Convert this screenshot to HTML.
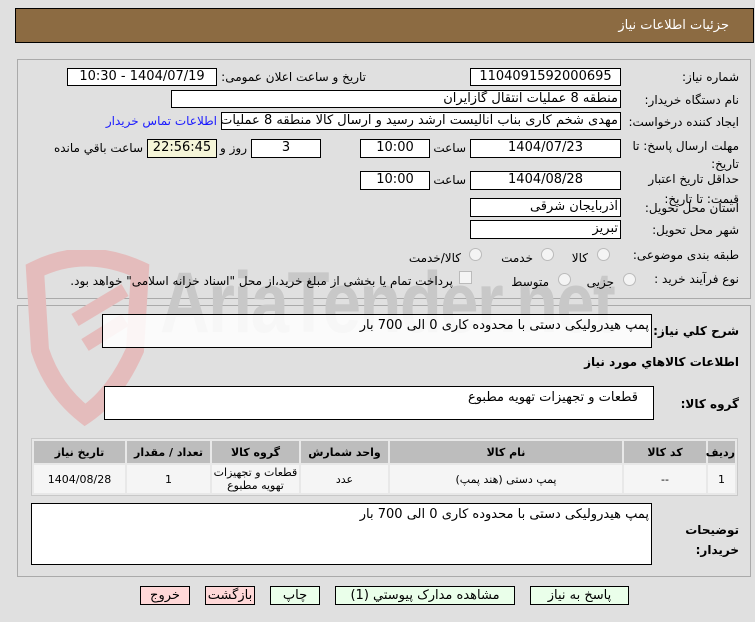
<!DOCTYPE html>
<html><head><meta charset="utf-8"><style>
*{margin:0;padding:0;box-sizing:border-box}
body{width:755px;height:622px;background:#e0e0e0;font-family:Tahoma,"DejaVu Sans","Liberation Sans",sans-serif;font-size:12px;color:#000;position:relative;overflow:hidden}
.a{position:absolute}
.r{direction:rtl;text-align:right;white-space:nowrap}
.box{position:absolute;background:#fff;border:1px solid #000;direction:rtl;white-space:nowrap;overflow:hidden;font-size:13px;line-height:16px;padding:0 2px}
.c{text-align:center}
.lbl{position:absolute;direction:rtl;white-space:nowrap;font-size:12px}
.rad{position:absolute;width:13px;height:13px;border-radius:50%;border:1px solid #bbb;background:#f4f4f4}
.btn{position:absolute;top:586px;height:19px;border:1px solid #000;background:#eaffea;font-size:13px;text-align:center;line-height:17px;direction:rtl}
table{border-collapse:separate;border-spacing:2px;position:absolute;left:31px;top:438px;width:707px;background:#e8e8e8;border:1px solid #c8c8c8;direction:rtl;font-size:11px;table-layout:fixed}
th{background:#bdbdbd;height:22px;font-weight:bold;font-size:11px}
td{background:#f5f5f5;height:28px;text-align:center;line-height:13px;overflow:hidden}
</style></head><body>
<div class="a" style="left:15px;top:8px;width:739px;height:35px;background:#8c6b42;border:1px solid #000"></div>
<div class="a r" style="right:26px;top:18px;color:#fff;font-size:13px">جزئیات اطلاعات نیاز</div>

<div class="a" style="left:17px;top:59px;width:734px;height:240px;border:1px solid #aaa"></div>
<div class="a" style="left:17px;top:305px;width:734px;height:272px;border:1px solid #aaa"></div>

<svg class="a" style="left:25px;top:250px" width="130" height="180" viewBox="0 0 130 180"><path d="M10 20 Q60 -5 115 20 L110 100 Q90 145 60 165 Q28 140 15 100 Z" fill="none" stroke="#e4bcbc" stroke-width="18"/><path d="M50 70 L100 40 M60 95 L100 70" stroke="#e4bcbc" stroke-width="14"/></svg>
<div class="a" style="left:160px;top:258px;font-size:86px;font-weight:bold;color:#c8c8c8;font-family:'Liberation Sans',sans-serif;letter-spacing:-2px;line-height:90px;transform:scaleX(0.8);transform-origin:left">AriaTender.net</div>

<div class="lbl" style="right:16px;top:70px">شماره نیاز:</div>
<div class="box c" style="left:470px;top:68px;width:151px;height:18px">1104091592000695</div>
<div class="lbl" style="right:389px;top:70px">تاریخ و ساعت اعلان عمومی:</div>
<div class="box c" style="left:67px;top:68px;width:150px;height:18px">1404/07/19 - 10:30</div>

<div class="lbl" style="right:16px;top:93px">نام دستگاه خریدار:</div>
<div class="box" style="left:171px;top:90px;width:450px;height:18px">منطقه 8 عملیات انتقال گازایران</div>

<div class="lbl" style="right:16px;top:115px">ایجاد کننده درخواست:</div>
<div class="box" style="left:221px;top:112px;width:400px;height:18px">مهدی شخم کاری بناب آنالیست ارشد رسید و ارسال کالا منطقه 8 عملیات انتقال</div>
<div class="lbl" style="right:538px;top:114px;color:#1a1aff">اطلاعات تماس خریدار</div>

<div class="lbl" style="right:16px;top:137px;line-height:18px">مهلت ارسال پاسخ: تا<br>تاریخ:</div>
<div class="box c" style="left:470px;top:139px;width:151px;height:19px">1404/07/23</div>
<div class="lbl" style="right:289px;top:141px">ساعت</div>
<div class="box c" style="left:360px;top:139px;width:70px;height:19px">10:00</div>
<div class="box c" style="left:251px;top:139px;width:70px;height:19px">3</div>
<div class="lbl" style="right:508px;top:141px">روز و</div>
<div class="box c" style="left:147px;top:139px;width:70px;height:19px;background:#f5f5d8">22:56:45</div>
<div class="lbl" style="right:612px;top:141px">ساعت باقي مانده</div>

<div class="lbl" style="right:16px;top:169px;line-height:20px">حداقل تاریخ اعتبار<br>قیمت: تا تاریخ:</div>
<div class="box c" style="left:470px;top:171px;width:151px;height:19px">1404/08/28</div>
<div class="lbl" style="right:289px;top:173px">ساعت</div>
<div class="box c" style="left:360px;top:171px;width:70px;height:19px">10:00</div>

<div class="lbl" style="right:16px;top:201px">استان محل تحویل:</div>
<div class="box" style="left:470px;top:198px;width:151px;height:19px">آذربایجان شرقی</div>
<div class="lbl" style="right:16px;top:223px">شهر محل تحویل:</div>
<div class="box" style="left:470px;top:220px;width:151px;height:19px">تبریز</div>

<div class="lbl" style="right:16px;top:248px">طبقه بندی موضوعی:</div>
<div class="rad" style="left:597px;top:248px"></div><div class="lbl" style="right:167px;top:251px">کالا</div>
<div class="rad" style="left:541px;top:248px"></div><div class="lbl" style="right:222px;top:251px">خدمت</div>
<div class="rad" style="left:469px;top:248px"></div><div class="lbl" style="right:294px;top:251px">کالا/خدمت</div>

<div class="lbl" style="right:16px;top:272px">نوع فرآیند خرید :</div>
<div class="rad" style="left:623px;top:273px"></div><div class="lbl" style="right:141px;top:275px">جزیی</div>
<div class="rad" style="left:558px;top:273px"></div><div class="lbl" style="right:206px;top:275px">متوسط</div>
<div class="a" style="left:459px;top:271px;width:13px;height:13px;border:1px solid #bbb;background:#f4f4f4"></div>
<div class="lbl" style="right:302px;top:274px">پرداخت تمام یا بخشی از مبلغ خرید،از محل "اسناد خزانه اسلامی" خواهد بود.</div>

<div class="lbl" style="right:16px;top:324px;font-weight:bold">شرح کلي نیاز:</div>
<div class="box" style="left:102px;top:314px;width:550px;height:34px;line-height:22px;background:rgba(255,255,255,0.85)">پمپ هیدرولیکی دستی با محدوده کاری 0 الی 700 بار</div>
<div class="lbl" style="right:16px;top:355px;font-weight:bold">اطلاعات کالاهاي مورد نیاز</div>
<div class="lbl" style="right:16px;top:397px;font-weight:bold">گروه کالا:</div>
<div class="box" style="left:104px;top:386px;width:550px;height:34px;line-height:22px;padding-right:15px">قطعات و تجهیزات تهویه مطبوع</div>

<table>
<colgroup><col style="width:27px"><col style="width:82px"><col><col style="width:87px"><col style="width:87px"><col style="width:83px"><col style="width:91px"></colgroup>
<tr><th>ردیف</th><th>کد کالا</th><th>نام کالا</th><th>واحد شمارش</th><th>گروه کالا</th><th>تعداد / مقدار</th><th>تاریخ نیاز</th></tr>
<tr><td>1</td><td>--</td><td>پمپ دستی (هند پمپ)</td><td>عدد</td><td>قطعات و تجهیزات تهویه مطبوع</td><td>1</td><td>1404/08/28</td></tr>
</table>

<div class="lbl" style="right:16px;top:520px;font-weight:bold;line-height:20px">توضیحات<br>خریدار:</div>
<div class="box" style="left:31px;top:503px;width:621px;height:62px;line-height:22px">پمپ هیدرولیکی دستی با محدوده کاری 0 الی 700 بار</div>

<div class="btn" style="left:530px;width:99px">پاسخ به نیاز</div>
<div class="btn" style="left:335px;width:180px">مشاهده مدارک پیوستي (1)</div>
<div class="btn" style="left:270px;width:50px">چاپ</div>
<div class="btn" style="left:205px;width:50px;background:#ffd8d8">بازگشت</div>
<div class="btn" style="left:140px;width:50px;background:#ffd8d8">خروج</div>
</body></html>
